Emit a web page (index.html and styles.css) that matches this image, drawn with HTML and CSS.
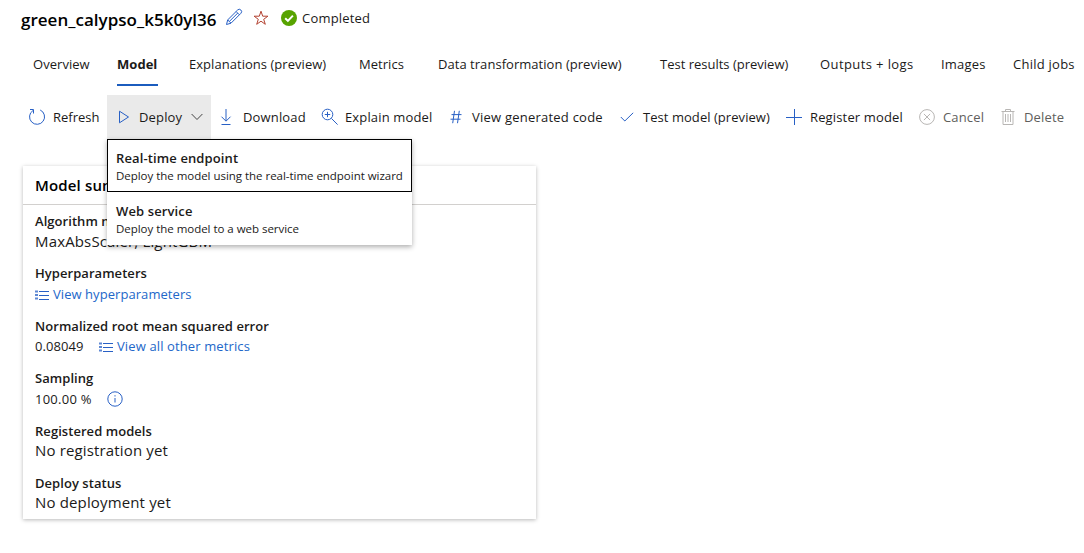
FILE: index.html
```html
<!DOCTYPE html>
<html lang="en">
<head>
<meta charset="utf-8">
<title>green_calypso_k5k0yl36</title>
<link rel="stylesheet" href="styles.css">
</head>
<body>
<header class="header">
  <h1 class="title">green_calypso_k5k0yl36</h1>
  <svg class="pencil" width="18" height="18" viewBox="0 0 18 18"><path d="M1.500 16.500l1.200-4.600L12.600 2a2.300 2.300 0 0 1 3.300 3.300L6 15.200zM2.700 11.900L6 15.200M11.100 3.500l3.300 3.300M4.300 13.500L12.700 5.100"/></svg>
  <svg class="star" width="16" height="16" viewBox="0 0 16 16"><path d="M8 1.200l1.700 5h5.200l-4.200 3.100 1.600 5L8 11.200l-4.300 3.100 1.600-5L1.100 6.200h5.200z"/></svg>
  <svg class="done" width="16" height="16" viewBox="0 0 16 16"><circle cx="8" cy="8" r="8"/><path d="M4.200 8.200l2.700 2.700 5-5.300"/></svg>
  <span class="status">Completed</span>
</header>
<nav class="tabs">
  <a class="tab w-overview">Overview</a>
  <a class="tab w-model active"><span class="tab-label">Model</span></a>
  <a class="tab w-explanations">Explanations (preview)</a>
  <a class="tab w-metrics">Metrics</a>
  <a class="tab w-transform">Data transformation (preview)</a>
  <a class="tab w-results">Test results (preview)</a>
  <a class="tab w-outputs">Outputs + logs</a>
  <a class="tab w-images">Images</a>
  <a class="tab w-jobs">Child jobs</a>
</nav>
<div class="toolbar">
  <button class="cmd c-refresh"><svg width="18" height="18" viewBox="0 0 18 18"><path d="M12.200 2A7.500 7.500 0 1 1 5 2.500M2 1.500H5.500V5.500"/></svg><span>Refresh</span></button>
  <div class="deploy">
    <button class="cmd c-deploy"><svg width="12" height="14" viewBox="0 0 12 14"><path d="M1.500 1.200v11.600L10.500 7z"/></svg><span>Deploy</span><svg class="chevron" width="12" height="8" viewBox="0 0 12 8"><path d="M.6 1L6 6.500 11.400 1"/></svg></button>
    <div class="menu">
      <div class="option focused"><strong>Real-time endpoint</strong><small>Deploy the model using the real-time endpoint wizard</small></div>
      <div class="option"><strong>Web service</strong><small>Deploy the model to a web service</small></div>
    </div>
  </div>
  <button class="cmd c-download"><svg width="12" height="18" viewBox="0 0 12 18"><path d="M6 1v12M1.500 8.700L6 13.200l4.500-4.500M1.500 16.500h9"/></svg><span>Download</span></button>
  <button class="cmd c-explain"><svg width="18" height="18" viewBox="0 0 18 18"><circle cx="6.500" cy="6.500" r="5.300"/><path d="M6.500 3.800v5.400M3.800 6.500h5.400M10.400 10.400l6.200 6.200"/></svg><span>Explain model</span></button>
  <button class="cmd c-code"><svg width="12" height="14" viewBox="0 0 12 14"><path d="M4.500.8L2.700 13.200M9.300.8L7.500 13.200M1.500 4.600h10M.5 9.200h10"/></svg><span>View generated code</span></button>
  <button class="cmd c-test"><svg width="14" height="10" viewBox="0 0 14 10"><path d="M.8 5l4 4L13.200.8"/></svg><span>Test model (preview)</span></button>
  <button class="cmd c-register"><svg width="16" height="16" viewBox="0 0 16 16"><path d="M8.500 0v16M0 8.500h16"/></svg><span>Register model</span></button>
  <button class="cmd c-cancel disabled"><svg width="16" height="16" viewBox="0 0 16 16"><circle cx="8" cy="8" r="7.400"/><path d="M4.900 4.900l6.200 6.200M11.100 4.900l-6.200 6.200"/></svg><span>Cancel</span></button>
  <button class="cmd c-delete disabled"><svg width="14" height="16" viewBox="0 0 14 16"><path d="M.5 2.500h13M4.500 2.500v-2h5v2M2 2.500v13h10v-13M4.500 5v8M7 5v8M9.500 5v8"/></svg><span>Delete</span></button>
</div>
<section class="card">
  <h2 class="card-title">Model summary</h2>
  <dl class="facts">
    <div class="fact"><dt>Algorithm name</dt><dd class="large">MaxAbsScaler, LightGBM</dd></div>
    <div class="fact"><dt>Hyperparameters</dt><dd><a class="link"><svg width="14" height="10" viewBox="0 0 14 10"><path d="M4 1.500H14M4 5.500H14M4 9.500H14"/><path class="bullets" d="M0 1.500h3M0 5h3M0 8.500h3"/></svg><span>View hyperparameters</span></a></dd></div>
    <div class="fact"><dt>Normalized root mean squared error</dt><dd><span class="score">0.08049</span><a class="link metrics"><svg width="14" height="10" viewBox="0 0 14 10"><path d="M4 1.500H14M4 5.500H14M4 9.500H14"/><path class="bullets" d="M0 1.500h3M0 5h3M0 8.500h3"/></svg><span>View all other metrics</span></a></dd></div>
    <div class="fact"><dt>Sampling</dt><dd><span class="percent">100.00 %</span><svg class="info" width="16" height="16" viewBox="0 0 16 16"><circle cx="8" cy="8" r="7.200"/><path d="M8 7v4.500M8 4.200v1.300"/></svg></dd></div>
    <div class="fact"><dt>Registered models</dt><dd class="large">No registration yet</dd></div>
    <div class="fact"><dt>Deploy status</dt><dd class="large">No deployment yet</dd></div>
  </dl>
</section>
</body>
</html>
```
FILE: styles.css
```css
* { box-sizing: border-box; }
body { margin: 0; height: 553px; overflow: hidden; background: #fff; color: #1b1a19; font: 13px/20px "Open Sans", "Noto Sans", sans-serif; white-space: nowrap; }
svg { flex: none; fill: none; stroke: #2860c5; stroke-width: 1; }
h1, h2, dl, dd { margin: 0; }

.header { display: flex; align-items: center; height: 38px; padding-left: 21px; }
.title { width: 204px; padding-top: 1px; font-size: 17px; font-weight: 600; line-height: 24px; letter-spacing: .02px; color: #000; }
.pencil { margin-bottom: 4px; }
.star { margin: 0 12px 2px 10px; stroke: #b34231; }
.done { margin-bottom: 2px; fill: #57a300; stroke: none; }
.done path { fill: none; stroke: #fff; stroke-width: 2; }
.status { margin: 0 0 2px 5px; letter-spacing: .2px; }

.tabs { display: flex; height: 48px; padding: 0 0 0 33px; letter-spacing: .04px; }
.tab { flex: none; height: 48px; padding-top: 16px; }
.w-overview { width: 84px; }
.w-model { width: 72px; }
.w-explanations { width: 170px; }
.w-metrics { width: 79px; }
.w-transform { width: 222px; }
.w-results { width: 160px; letter-spacing: 0; }
.w-outputs { width: 121px; letter-spacing: .4px; }
.w-images { width: 72px; letter-spacing: .2px; }
.w-jobs { letter-spacing: .25px; }
.tab-label { display: block; width: 41px; height: 32px; border-bottom: 2px solid #1b5cbe; font-weight: 700; }

.toolbar { display: flex; height: 53px; padding: 9px 0 0 28px; }
.cmd { display: flex; flex: none; align-items: center; height: 44px; padding: 0; border: 0; background: none; color: inherit; font: inherit; letter-spacing: .15px; }
.c-refresh { width: 79px; gap: 7px; letter-spacing: 0; }
.deploy { position: relative; width: 104px; }
.c-deploy { width: 104px; padding-left: 11px; background: #eaeaea; }
.c-deploy span { width: 52px; margin-left: 9px; text-align: left; }
.chevron { stroke: #444; }
.c-download { width: 111px; padding-left: 9px; gap: 11px; }
.c-explain { width: 128px; gap: 6px; margin-left: -1px; }
.c-code { width: 171px; gap: 10px; padding-left: 1px; letter-spacing: .23px; }
.c-test { width: 166px; gap: 9px; letter-spacing: .05px; }
.c-register { width: 133px; gap: 8px; }
.c-cancel { width: 82px; gap: 8px; }
.c-delete { gap: 9px; }
.disabled { color: #605e5c; }
.disabled svg { stroke: #b8b6b4; }

.menu { position: absolute; z-index: 1; top: 44px; left: 0; width: 305px; height: 106px; background: #fff; box-shadow: 0 2px 5px rgba(0, 0, 0, .32); }
.option { display: flex; flex-direction: column; height: 53px; padding: 9px 8px 0; border: 1px solid transparent; }
.focused { border-color: #000; }
.option strong { font-weight: 600; line-height: 19px; letter-spacing: .12px; }
.option small { font-size: 11.5px; line-height: 16px; letter-spacing: -.03px; }

.card { width: 513px; height: 353px; margin: 27px 0 0 23px; background: #fff; box-shadow: 0 1px 4px rgba(0, 0, 0, .28); }
.card-title { height: 39px; padding: 9px 12px 0; border-bottom: 1px solid #d2d0ce; font-size: 15px; font-weight: 600; line-height: 21px; letter-spacing: .15px; color: #000; }
.facts { padding: 6px 12px 0; }
.fact { height: 52.4px; }
.fact dt { height: 20px; font-weight: 600; letter-spacing: .05px; }
.fact dd { display: flex; align-items: center; height: 21px; letter-spacing: .06px; }
.fact .large { height: 19px; font-size: 15px; letter-spacing: .15px; }
.link { display: flex; align-items: center; gap: 4px; color: #2267c9; }
.metrics { letter-spacing: .12px; }
.link svg { margin-top: 2px; }
.bullets { stroke-width: 2; stroke-opacity: .75; }
.score { width: 64px; }
.percent { width: 72px; letter-spacing: .25px; }
```
